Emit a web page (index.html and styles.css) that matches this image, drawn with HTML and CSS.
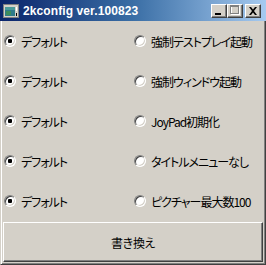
FILE: index.html
```html
<!DOCTYPE html>
<html lang="ja">
<head>
    <meta charset="UTF-8">
    <title>2kconfig ver.100823</title>
    <link rel="stylesheet" href="styles.css">
</head>
<body>
    <div class="window">
        <div class="titlebar">
            <svg class="app-icon" width="16" height="16" viewBox="0 0 16 16">
                <rect x="0.5" y="1.5" width="15" height="13" fill="#d4d0c8" stroke="#808080"/>
                <rect x="2" y="4" width="10" height="9" fill="#2f7a8a"/>
                <rect x="2" y="4" width="10" height="3" fill="#4a9a9a"/>
                <rect x="3" y="8" width="5" height="4" fill="#3c8c5c"/>
                <rect x="13" y="4" width="1" height="4" fill="#ffffff"/>
                <rect x="13" y="10" width="1" height="3" fill="#000000"/>
            </svg>
            <span class="title">2kconfig ver.100823</span>
            <div class="caption-buttons">
                <span class="cap-btn">
                    <svg width="14" height="12" viewBox="0 0 14 12"><rect x="3" y="8" width="6" height="2" fill="#000"/></svg>
                </span>
                <span class="cap-btn">
                    <svg width="14" height="12" viewBox="0 0 14 12">
                        <rect x="3.5" y="1.5" width="8" height="8" fill="none" stroke="#ffffff"/>
                        <rect x="2.5" y="0.5" width="8" height="8" fill="none" stroke="#808080"/>
                        <rect x="2" y="1" width="9" height="1" fill="#808080"/>
                    </svg>
                </span>
                <span class="cap-btn close">
                    <svg width="14" height="12" viewBox="0 0 14 12">
                        <path d="M3 2h2l2 2.5L9 2h2L8 6l3 4H9L7 7.5 5 10H3l3-4z" fill="#000"/>
                    </svg>
                </span>
            </div>
        </div>

        <div class="client">
            <div class="options">
                <label class="option"><span class="radio checked"></span>デフォルト</label>
                <label class="option"><span class="radio"></span>強制テストプレイ起動</label>
                <label class="option"><span class="radio checked"></span>デフォルト</label>
                <label class="option"><span class="radio"></span>強制ウィンドウ起動</label>
                <label class="option"><span class="radio checked"></span>デフォルト</label>
                <label class="option"><span class="radio"></span>JoyPad初期化</label>
                <label class="option"><span class="radio checked"></span>デフォルト</label>
                <label class="option"><span class="radio"></span>タイトルメニューなし</label>
                <label class="option"><span class="radio checked"></span>デフォルト</label>
                <label class="option"><span class="radio"></span>ピクチャー最大数100</label>
            </div>
            <button class="apply">書き換え</button>
        </div>
    </div>
</body>
</html>
```

FILE: styles.css
```css
* {
    margin: 0;
    padding: 0;
    box-sizing: border-box;
}

body {
    width: 266px;
    height: 265px;
    background: #d4d0c8;
    font-family: "Noto Sans CJK JP", "Liberation Sans", sans-serif;
    font-size: 12px;
    color: #000;
    overflow: hidden;
}

.window {
    width: 266px;
    height: 265px;
    display: flex;
    flex-direction: column;
}

/* タイトルバー */
.titlebar {
    height: 21px;
    display: flex;
    align-items: center;
    padding-left: 3px;
    background: linear-gradient(90deg, #0a246a 0%, #3a6ea5 50%, #a6caf0 100%);
    color: #fff;
}

.app-icon {
    flex: none;
}

.title {
    margin-left: 4px;
    font-family: "Liberation Sans", sans-serif;
    font-weight: bold;
    font-size: 12px;
    letter-spacing: 0.1px;
}

.caption-buttons {
    margin-left: auto;
    margin-right: 5px;
    display: flex;
}

.cap-btn {
    width: 16px;
    height: 14px;
    display: flex;
    align-items: center;
    justify-content: center;
    background: #d4d0c8;
    border: 1px solid;
    border-color: #fff #404040 #404040 #fff;
    box-shadow: inset -1px -1px #808080;
}

.cap-btn.close {
    margin-left: 2px;
}

/* クライアント領域 */
.client {
    flex: 1;
    display: flex;
    flex-direction: column;
    border: 1px solid;
    border-top: none;
    border-color: #d4d0c8 #404040 #404040 #d4d0c8;
    box-shadow: inset 1px 0 #fff, inset -1px -1px #808080;
    padding: 0 2px 2px 2px;
}

.options {
    display: grid;
    grid-template-columns: 130px 130px;
    grid-auto-rows: 40px;
    margin-bottom: 1px;
}

.option {
    display: flex;
    align-items: center;
    padding-left: 1px;
    font-feature-settings: "palt";
    letter-spacing: -1px;
    white-space: nowrap;
}

.radio {
    position: relative;
    width: 12px;
    height: 12px;
    margin-right: 5px;
    border-radius: 50%;
    background: #fff;
    border: 1px solid;
    border-color: #808080 #fff #fff #808080;
    box-shadow: inset 1px 1px #404040, inset -1px -1px #d4d0c8;
    flex: none;
}

.radio.checked::after {
    content: "";
    position: absolute;
    left: 3px;
    top: 3px;
    width: 4px;
    height: 4px;
    border-radius: 1px;
    background: #000;
}

.apply {
    height: 40px;
    background: #d4d0c8;
    font-family: inherit;
    font-size: 12px;
    letter-spacing: -1px;
    color: #000;
    border: 1px solid;
    border-color: #fff #404040 #404040 #fff;
    box-shadow: inset -1px -1px #808080;
}
```
